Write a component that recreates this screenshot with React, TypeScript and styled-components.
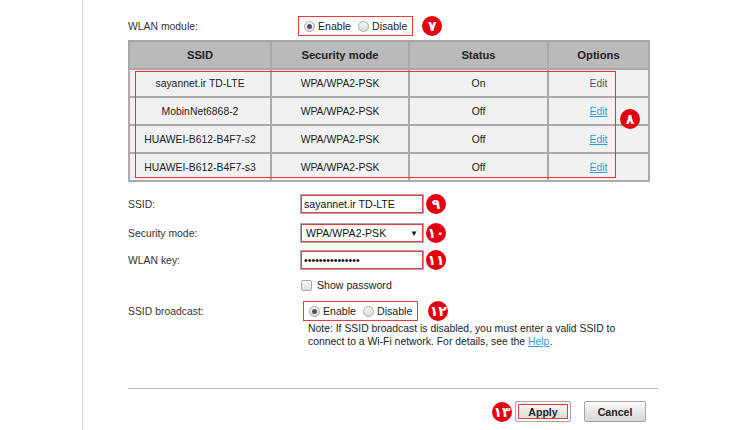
import React from 'react';
import styled, { createGlobalStyle } from 'styled-components';

const GlobalStyle = createGlobalStyle`
  html, body {
    margin: 0;
    padding: 0;
    background: #fff;
  }
  body {
    font-family: "Liberation Sans", Arial, sans-serif;
    font-size: 10.4px;
    color: #333;
  }
`;

type NetworkRow = {
  ssid: string;
  mode: string;
  status: string;
  link: boolean;
};

const networks: NetworkRow[] = [
  { ssid: 'sayannet.ir TD-LTE', mode: 'WPA/WPA2-PSK', status: 'On', link: false },
  { ssid: 'MobinNet6868-2', mode: 'WPA/WPA2-PSK', status: 'Off', link: true },
  { ssid: 'HUAWEI-B612-B4F7-s2', mode: 'WPA/WPA2-PSK', status: 'Off', link: true },
  { ssid: 'HUAWEI-B612-B4F7-s3', mode: 'WPA/WPA2-PSK', status: 'Off', link: true },
];

function Badge(props: { n: string; $ml?: number; $mr?: number }) {
  return (
    <BadgeDot $ml={props.$ml} $mr={props.$mr}>
      {props.n}
    </BadgeDot>
  );
}

function RadioPair() {
  return (
    <>
      <RadioLabel>
        <Radio $checked />
        Enable
      </RadioLabel>
      <RadioLabel>
        <Radio />
        Disable
      </RadioLabel>
    </>
  );
}

export default function App() {
  return (
    <Page>
      <GlobalStyle />
      <Rail />
      <Main>
        <Row $h={20}>
          <Label>WLAN module:</Label>
          <RedBox $ml={-2}>
            <RadioPair />
          </RedBox>
          <Badge n="۷" $ml={9} />
        </Row>

        <TableWrap>
          <Table>
            <colgroup>
              <col style={{ width: 142 }} />
              <col style={{ width: 138 }} />
              <col style={{ width: 139 }} />
              <col style={{ width: 101 }} />
            </colgroup>
            <thead>
              <tr>
                <Th>SSID</Th>
                <Th>Security mode</Th>
                <Th>Status</Th>
                <Th>Options</Th>
              </tr>
            </thead>
            <tbody>
              {networks.map((n) => (
                <tr key={n.ssid}>
                  <Td>{n.ssid}</Td>
                  <Td>{n.mode}</Td>
                  <Td>{n.status}</Td>
                  <Td>{n.link ? <Link href="#">Edit</Link> : <Muted>Edit</Muted>}</Td>
                </tr>
              ))}
            </tbody>
          </Table>
          <RowsMark />
          <FloatBadge>۸</FloatBadge>
        </TableWrap>

        <Row $h={20} $mt={12}>
          <Label>SSID:</Label>
          <Field>
            <TextInput readOnly value="sayannet.ir TD-LTE" />
          </Field>
          <Badge n="۹" $ml={2} />
        </Row>

        <Row $h={20} $mt={9}>
          <Label>Security mode:</Label>
          <Field>
            <Select defaultValue="wpa">
              <option value="wpa">WPA/WPA2-PSK</option>
            </Select>
            <Arrow>▼</Arrow>
          </Field>
          <Badge n="۱۰" $ml={2} />
        </Row>

        <Row $h={20} $mt={7}>
          <Label>WLAN key:</Label>
          <Field>
            <TextInput type="password" readOnly value="sayannet.ir1234" />
          </Field>
          <Badge n="۱۱" $ml={2} />
        </Row>

        <Row $h={16} $mt={7}>
          <Label />
          <CheckLabel>
            <Check />
            Show password
          </CheckLabel>
        </Row>

        <Row $h={20} $mt={8}>
          <Label>SSID broadcast:</Label>
          <RedBox $ml={3}>
            <RadioPair />
          </RedBox>
          <Badge n="۱۲" $ml={10} />
        </Row>

        <Note>
          Note: If SSID broadcast is disabled, you must enter a valid SSID to
          <br />
          connect to a Wi-Fi network. For details, see the <Link href="#">Help</Link>.
        </Note>

        <Divider />

        <Actions>
          <Badge n="۱۳" $mr={3} />
          <Button $marked>Apply</Button>
          <Button>Cancel</Button>
        </Actions>
      </Main>
    </Page>
  );
}

const Page = styled.div`
  display: flex;
  width: 750px;
  height: 430px;
  overflow: hidden;
  background: #fff;
`;

const Rail = styled.div`
  flex: 0 0 82px;
  border-right: 1px solid #dedede;
`;

const Main = styled.div`
  display: flex;
  flex-direction: column;
  padding: 16px 0 0 45px;
  width: 532px;
`;

const Row = styled.div<{ $h: number; $mt?: number }>`
  display: flex;
  align-items: center;
  height: ${(p) => p.$h}px;
  margin-top: ${(p) => p.$mt ?? 0}px;
`;

const Label = styled.span`
  flex: 0 0 172px;
  color: #333;
`;

const RedBox = styled.div<{ $ml?: number }>`
  display: flex;
  align-items: center;
  gap: 7px;
  height: 18px;
  padding: 0 5px;
  margin-left: ${(p) => p.$ml ?? 0}px;
  border: 1px solid #ec3b3b;
`;

const RadioLabel = styled.label`
  display: flex;
  align-items: center;
  gap: 3px;
  font-size: 10.6px;
  color: #222;
`;

const Radio = styled.span<{ $checked?: boolean }>`
  position: relative;
  width: 11px;
  height: 11px;
  box-sizing: border-box;
  border-radius: 50%;
  border: 1px solid #a8a8a8;
  background: linear-gradient(#f6f6f6, #dcdcdc);

  &::after {
    content: '';
    display: ${(p) => (p.$checked ? 'block' : 'none')};
    position: absolute;
    left: 2px;
    top: 2px;
    width: 5px;
    height: 5px;
    border-radius: 50%;
    background: #555;
  }
`;

const BadgeDot = styled.span<{ $ml?: number; $mr?: number }>`
  display: inline-flex;
  align-items: center;
  justify-content: center;
  flex: 0 0 20px;
  width: 20px;
  height: 20px;
  margin-left: ${(p) => p.$ml ?? 0}px;
  margin-right: ${(p) => p.$mr ?? 0}px;
  border-radius: 50%;
  background: #e3000f;
  color: #fff;
  font-family: "DejaVu Sans", sans-serif;
  font-weight: bold;
  font-size: 14px;
  line-height: 1;
  letter-spacing: -1px;
`;

const TableWrap = styled.div`
  position: relative;
  width: 520px;
  margin-top: 4px;
`;

const Table = styled.table`
  width: 520px;
  border-collapse: collapse;
  table-layout: fixed;
  border: 2px solid #ababab;
`;

const Th = styled.th`
  height: 26px;
  padding: 0;
  background: #bababa;
  border: 2px solid #a8a8a8;
  font-size: 11.2px;
  font-weight: bold;
  color: #222;
  text-align: center;
`;

const Td = styled.td`
  height: 26px;
  padding: 0;
  background: #f1f1f1;
  border: 2px solid #ababab;
  text-align: center;
  color: #222;
`;

const Link = styled.a`
  color: #2a9fd8;
  text-decoration: underline;
`;

const Muted = styled.span`
  color: #555;
`;

const RowsMark = styled.div`
  position: absolute;
  z-index: 1;
  left: 7px;
  top: 31px;
  width: 481px;
  height: 107px;
  box-sizing: border-box;
  border: 1px solid #f03030;
  pointer-events: none;
`;

const FloatBadge = styled(BadgeDot)`
  position: absolute;
  z-index: 2;
  left: 492px;
  top: 69px;
`;

const Field = styled.div`
  position: relative;
  display: flex;
  width: 124px;
  height: 20px;
  box-sizing: border-box;
  border: 1px solid #a9a9a9;
  background: #fff;
`;

const TextInput = styled.input`
  width: 100%;
  height: 100%;
  box-sizing: border-box;
  margin: 0;
  padding: 0 2px;
  border: 1px solid #ec3b3b;
  outline: none;
  font-family: "Liberation Sans", Arial, sans-serif;
  font-size: 10.6px;
  color: #111;
  background: #fff;
`;

const Select = styled.select`
  width: 100%;
  height: 100%;
  box-sizing: border-box;
  margin: 0;
  padding: 0 4px;
  border: 1px solid #ec3b3b;
  border-radius: 0;
  outline: none;
  appearance: none;
  font-family: "Liberation Sans", Arial, sans-serif;
  font-size: 10.6px;
  color: #111;
  background: #fff;
`;

const Arrow = styled.span`
  position: absolute;
  right: 5px;
  top: 5px;
  font-size: 8px;
  color: #111;
  pointer-events: none;
`;

const CheckLabel = styled.label`
  display: flex;
  align-items: center;
  gap: 5px;
  margin-left: 1px;
  font-size: 10.6px;
  color: #222;
`;

const Check = styled.span`
  width: 11px;
  height: 11px;
  box-sizing: border-box;
  border: 1px solid #a8a8a8;
  border-radius: 2px;
  background: linear-gradient(#f8f8f8, #dedede);
`;

const Note = styled.p`
  margin: 1px 0 0 180px;
  font-size: 10.4px;
  line-height: 13px;
  color: #222;
`;

const Divider = styled.hr`
  width: 530px;
  margin: 40px 0 0;
  border: 0;
  border-top: 1px solid #bdbdbd;
`;

const Actions = styled.div`
  display: flex;
  align-items: center;
  justify-content: flex-end;
  width: 518px;
  margin-top: 12px;

  & > button + button {
    margin-left: 13px;
  }
`;

const Button = styled.button<{ $marked?: boolean }>`
  height: 21px;
  min-width: ${(p) => (p.$marked ? 56 : 62)}px;
  padding: 0 8px;
  box-sizing: border-box;
  border: 1px solid #a5a5a5;
  border-radius: 2px;
  background: linear-gradient(#fafafa, #d6d6d6);
  box-shadow: ${(p) => (p.$marked ? 'inset 0 0 0 2px #fff, inset 0 0 0 3px #ec3b3b' : 'none')};
  font-family: "Liberation Sans", Arial, sans-serif;
  font-weight: bold;
  font-size: 10.6px;
  color: #222;
`;
